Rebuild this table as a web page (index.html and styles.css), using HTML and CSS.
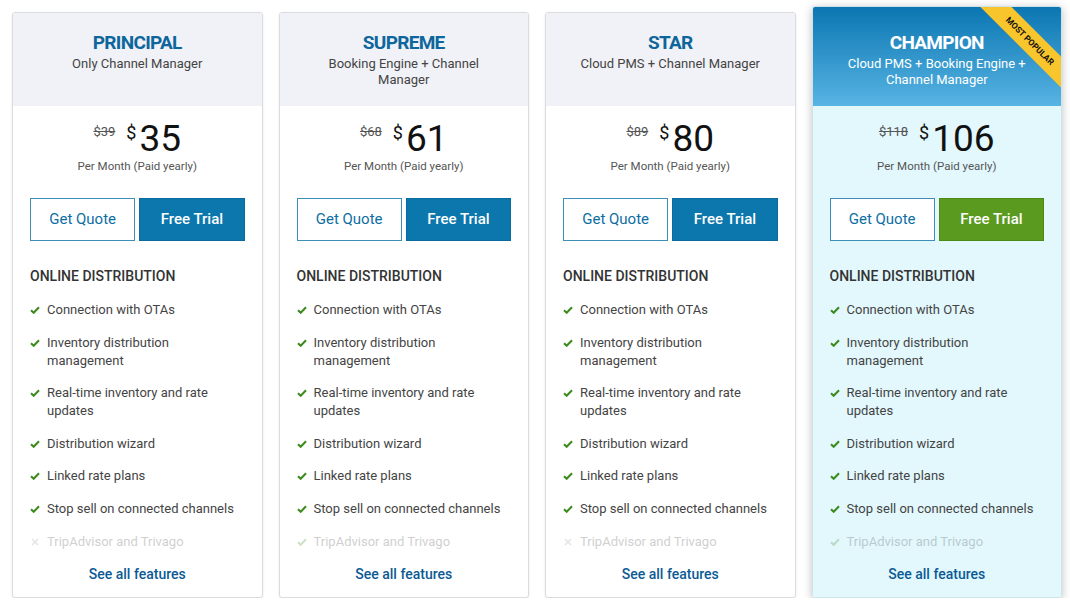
FILE: index.html
```html
<!DOCTYPE html>
<html lang="en">
<head>
  <meta charset="UTF-8">
  <meta name="viewport" content="width=device-width, initial-scale=1.0">
  <title>Pricing Plans</title>
  <link rel="stylesheet" href="styles.css">
</head>
<body>

  <div class="plans">

    <!-- Principal -->
    <div class="plan">
      <div class="plan-head">
        <h3>PRINCIPAL</h3>
        <p>Only Channel Manager</p>
      </div>
      <div class="plan-body">
        <div class="price"><s>$39</s><span class="cur">$</span><span class="amount">35</span></div>
        <div class="period">Per Month (Paid yearly)</div>
        <div class="actions">
          <a href="#" class="btn btn-outline">Get Quote</a>
          <a href="#" class="btn btn-solid">Free Trial</a>
        </div>
        <h4>ONLINE DISTRIBUTION</h4>
        <ul class="features">
          <li><svg class="ico" viewBox="0 0 10 8"><path d="M1 4.2 3.7 6.8 9 1.3"/></svg><span>Connection with OTAs</span></li>
          <li><svg class="ico" viewBox="0 0 10 8"><path d="M1 4.2 3.7 6.8 9 1.3"/></svg><span>Inventory distribution management</span></li>
          <li><svg class="ico" viewBox="0 0 10 8"><path d="M1 4.2 3.7 6.8 9 1.3"/></svg><span>Real-time inventory and rate updates</span></li>
          <li><svg class="ico" viewBox="0 0 10 8"><path d="M1 4.2 3.7 6.8 9 1.3"/></svg><span>Distribution wizard</span></li>
          <li><svg class="ico" viewBox="0 0 10 8"><path d="M1 4.2 3.7 6.8 9 1.3"/></svg><span>Linked rate plans</span></li>
          <li><svg class="ico" viewBox="0 0 10 8"><path d="M1 4.2 3.7 6.8 9 1.3"/></svg><span>Stop sell on connected channels</span></li>
          <li class="faded"><svg class="ico no" viewBox="0 0 10 8"><path d="M2 1 8 7M8 1 2 7"/></svg><span>TripAdvisor and Trivago</span></li>
        </ul>
        <a href="#" class="see-all">See all features</a>
      </div>
    </div>

    <!-- Supreme -->
    <div class="plan">
      <div class="plan-head">
        <h3>SUPREME</h3>
        <p>Booking Engine + Channel Manager</p>
      </div>
      <div class="plan-body">
        <div class="price"><s>$68</s><span class="cur">$</span><span class="amount">61</span></div>
        <div class="period">Per Month (Paid yearly)</div>
        <div class="actions">
          <a href="#" class="btn btn-outline">Get Quote</a>
          <a href="#" class="btn btn-solid">Free Trial</a>
        </div>
        <h4>ONLINE DISTRIBUTION</h4>
        <ul class="features">
          <li><svg class="ico" viewBox="0 0 10 8"><path d="M1 4.2 3.7 6.8 9 1.3"/></svg><span>Connection with OTAs</span></li>
          <li><svg class="ico" viewBox="0 0 10 8"><path d="M1 4.2 3.7 6.8 9 1.3"/></svg><span>Inventory distribution management</span></li>
          <li><svg class="ico" viewBox="0 0 10 8"><path d="M1 4.2 3.7 6.8 9 1.3"/></svg><span>Real-time inventory and rate updates</span></li>
          <li><svg class="ico" viewBox="0 0 10 8"><path d="M1 4.2 3.7 6.8 9 1.3"/></svg><span>Distribution wizard</span></li>
          <li><svg class="ico" viewBox="0 0 10 8"><path d="M1 4.2 3.7 6.8 9 1.3"/></svg><span>Linked rate plans</span></li>
          <li><svg class="ico" viewBox="0 0 10 8"><path d="M1 4.2 3.7 6.8 9 1.3"/></svg><span>Stop sell on connected channels</span></li>
          <li class="faded"><svg class="ico" viewBox="0 0 10 8"><path d="M1 4.2 3.7 6.8 9 1.3"/></svg><span>TripAdvisor and Trivago</span></li>
        </ul>
        <a href="#" class="see-all">See all features</a>
      </div>
    </div>

    <!-- Star -->
    <div class="plan">
      <div class="plan-head">
        <h3>STAR</h3>
        <p>Cloud PMS + Channel Manager</p>
      </div>
      <div class="plan-body">
        <div class="price"><s>$89</s><span class="cur">$</span><span class="amount">80</span></div>
        <div class="period">Per Month (Paid yearly)</div>
        <div class="actions">
          <a href="#" class="btn btn-outline">Get Quote</a>
          <a href="#" class="btn btn-solid">Free Trial</a>
        </div>
        <h4>ONLINE DISTRIBUTION</h4>
        <ul class="features">
          <li><svg class="ico" viewBox="0 0 10 8"><path d="M1 4.2 3.7 6.8 9 1.3"/></svg><span>Connection with OTAs</span></li>
          <li><svg class="ico" viewBox="0 0 10 8"><path d="M1 4.2 3.7 6.8 9 1.3"/></svg><span>Inventory distribution management</span></li>
          <li><svg class="ico" viewBox="0 0 10 8"><path d="M1 4.2 3.7 6.8 9 1.3"/></svg><span>Real-time inventory and rate updates</span></li>
          <li><svg class="ico" viewBox="0 0 10 8"><path d="M1 4.2 3.7 6.8 9 1.3"/></svg><span>Distribution wizard</span></li>
          <li><svg class="ico" viewBox="0 0 10 8"><path d="M1 4.2 3.7 6.8 9 1.3"/></svg><span>Linked rate plans</span></li>
          <li><svg class="ico" viewBox="0 0 10 8"><path d="M1 4.2 3.7 6.8 9 1.3"/></svg><span>Stop sell on connected channels</span></li>
          <li class="faded"><svg class="ico no" viewBox="0 0 10 8"><path d="M2 1 8 7M8 1 2 7"/></svg><span>TripAdvisor and Trivago</span></li>
        </ul>
        <a href="#" class="see-all">See all features</a>
      </div>
    </div>

    <!-- Champion -->
    <div class="plan featured">
      <div class="plan-head">
        <h3>CHAMPION</h3>
        <p>Cloud PMS + Booking Engine + Channel Manager</p>
        <div class="ribbon">MOST POPULAR</div>
      </div>
      <div class="plan-body">
        <div class="price"><s>$118</s><span class="cur">$</span><span class="amount">106</span></div>
        <div class="period">Per Month (Paid yearly)</div>
        <div class="actions">
          <a href="#" class="btn btn-outline">Get Quote</a>
          <a href="#" class="btn btn-green">Free Trial</a>
        </div>
        <h4>ONLINE DISTRIBUTION</h4>
        <ul class="features">
          <li><svg class="ico" viewBox="0 0 10 8"><path d="M1 4.2 3.7 6.8 9 1.3"/></svg><span>Connection with OTAs</span></li>
          <li><svg class="ico" viewBox="0 0 10 8"><path d="M1 4.2 3.7 6.8 9 1.3"/></svg><span>Inventory distribution management</span></li>
          <li><svg class="ico" viewBox="0 0 10 8"><path d="M1 4.2 3.7 6.8 9 1.3"/></svg><span>Real-time inventory and rate updates</span></li>
          <li><svg class="ico" viewBox="0 0 10 8"><path d="M1 4.2 3.7 6.8 9 1.3"/></svg><span>Distribution wizard</span></li>
          <li><svg class="ico" viewBox="0 0 10 8"><path d="M1 4.2 3.7 6.8 9 1.3"/></svg><span>Linked rate plans</span></li>
          <li><svg class="ico" viewBox="0 0 10 8"><path d="M1 4.2 3.7 6.8 9 1.3"/></svg><span>Stop sell on connected channels</span></li>
          <li class="faded"><svg class="ico" viewBox="0 0 10 8"><path d="M1 4.2 3.7 6.8 9 1.3"/></svg><span>TripAdvisor and Trivago</span></li>
        </ul>
        <a href="#" class="see-all">See all features</a>
      </div>
    </div>

  </div>

</body>
</html>
```

FILE: styles.css
```css
/* General Reset */
* {
  margin: 0;
  padding: 0;
  box-sizing: border-box;
}

body {
  font-family: 'Roboto', 'Liberation Sans', Arial, sans-serif;
  background-color: #fff;
  color: #444;
}

/* Plans grid */
.plans {
  display: grid;
  grid-template-columns: repeat(4, 1fr);
  gap: 16px;
  align-items: start;
  padding: 12px 8px 0 12px;
}

.plan {
  position: relative;
  overflow: hidden;
  background-color: #fff;
  border: 1px solid #dcdcdc;
  border-radius: 3px;
  box-shadow: 0 1px 3px rgba(0, 0, 0, 0.08);
}

/* Header */
.plan-head {
  position: relative;
  height: 93px;
  padding: 19px 30px 0;
  text-align: center;
  background-color: #f1f2f7;
}

.plan-head h3 {
  color: #0d669c;
  font-size: 19px;
  line-height: 22px;
  font-weight: 700;
  letter-spacing: -0.7px;
}

.plan-head p {
  margin-top: 2px;
  font-size: 13px;
  line-height: 16px;
  color: #444;
}

/* Body */
.plan-body {
  padding: 13px 17px 14px;
  text-align: center;
}

.price {
  display: flex;
  justify-content: center;
  align-items: flex-start;
  height: 40px;
  color: #111;
}

.price s {
  font-size: 13px;
  line-height: 16px;
  color: #555;
  margin-top: 5px;
  margin-right: 11px;
}

.price .cur {
  font-size: 18px;
  line-height: 20px;
  margin-top: 4px;
  margin-right: 3px;
}

.price .amount {
  font-size: 37px;
  line-height: 40px;
}

.period {
  font-size: 11.5px;
  line-height: 14px;
  color: #555;
}

.actions {
  display: flex;
  gap: 4px;
  margin-top: 25px;
}

.btn {
  flex: 1;
  height: 43px;
  line-height: 41px;
  font-size: 15px;
  text-decoration: none;
  border: 1px solid transparent;
}

.btn-outline {
  color: #0d6ea3;
  background-color: #fff;
  border-color: #3e8fb5;
}

.btn-solid {
  color: #fff;
  font-weight: 500;
  background-color: #0b77ad;
  border-color: #0a6a9c;
}

.btn-green {
  color: #fff;
  font-weight: 500;
  background-color: #5a9a1e;
  border-color: #4c8a16;
}

.plan-body h4 {
  margin-top: 26px;
  text-align: left;
  font-size: 14px;
  line-height: 18px;
  font-weight: 500;
  color: #333;
}

/* Feature list */
.features {
  list-style-type: none;
  margin-top: 16px;
  text-align: left;
}

.features li {
  display: flex;
  align-items: flex-start;
  gap: 7px;
  margin-bottom: 14.6px;
  font-size: 13px;
  line-height: 18px;
  color: #444;
}

.features li:last-child {
  margin-bottom: 0;
}

.ico {
  flex: none;
  width: 10px;
  height: 8px;
  margin-top: 5px;
  fill: none;
  stroke: #3b8a1c;
  stroke-width: 2;
}

.ico.no {
  stroke: #999;
  stroke-width: 1.6;
}

.features li.faded {
  opacity: 0.25;
}

.see-all {
  display: block;
  margin-top: 14px;
  font-size: 14px;
  line-height: 18px;
  font-weight: 500;
  color: #0b5a94;
  text-decoration: none;
}

/* Featured plan */
.plan.featured {
  margin-top: -6px;
  border-color: #cfe3ea;
  box-shadow: 0 2px 10px rgba(0, 0, 0, 0.25);
}

.featured .plan-head {
  height: 99px;
  padding-top: 25px;
  background: linear-gradient(#0b76b2, #58b4e3);
}

.featured .plan-head h3,
.featured .plan-head p {
  color: #fff;
}

.featured .plan-body {
  background-color: #e2f8fd;
}

.ribbon {
  position: absolute;
  top: 23px;
  right: -34px;
  width: 130px;
  height: 22px;
  line-height: 22px;
  transform: rotate(45deg);
  background-color: #f8c62c;
  color: #111;
  font-size: 8.5px;
  font-weight: 700;
  text-align: center;
}
```
